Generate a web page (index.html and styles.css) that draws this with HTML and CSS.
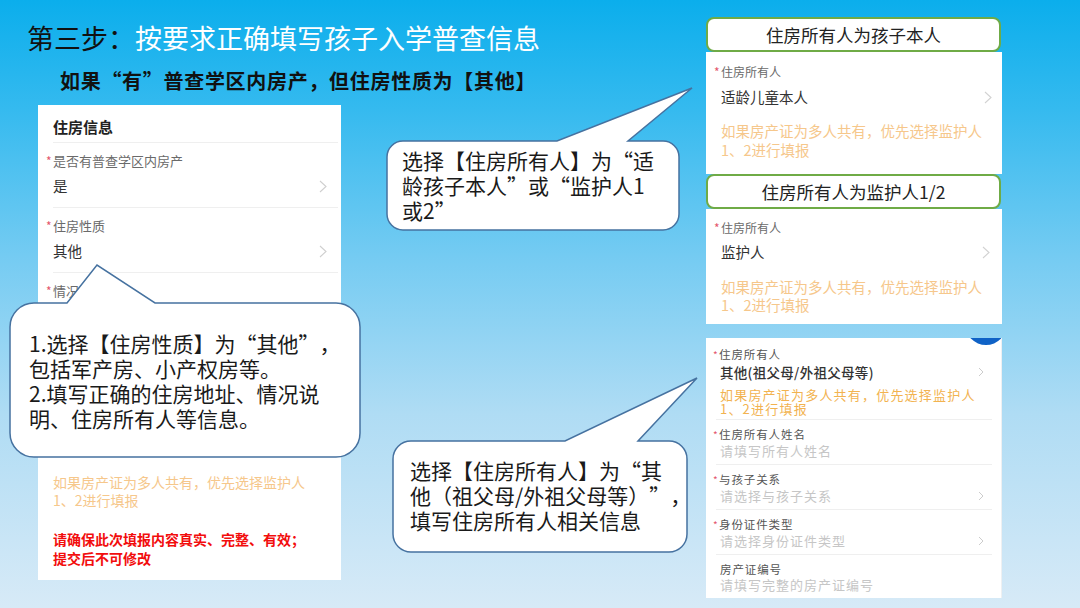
FILE: index.html
```html
<!DOCTYPE html>
<html lang="zh-CN">
<head>
<meta charset="utf-8">
<title>第三步</title>
<link rel="stylesheet" href="styles.css">
</head>
<body>
<div class="slide">
  <div class="left">
    <h1 class="title"><span class="step">第三步：</span>按要求正确填写孩子入学普查信息</h1>
    <p class="subtitle">如果“有”普查学区内房产，但住房性质为【其他】</p>
    <section class="form-main">
      <div class="form-head">住房信息</div>
      <div class="row">
        <div class="label"><span class="star">*</span>是否有普查学区内房产</div>
        <div class="value"><span>是</span><svg class="chev" width="8" height="13" viewBox="0 0 8 13"><path d="M1 1l6 5.5L1 12" fill="none" stroke="#cfcfcf" stroke-width="1.1"/></svg></div>
      </div>
      <div class="row">
        <div class="label"><span class="star">*</span>住房性质</div>
        <div class="value"><span>其他</span><svg class="chev" width="8" height="13" viewBox="0 0 8 13"><path d="M1 1l6 5.5L1 12" fill="none" stroke="#cfcfcf" stroke-width="1.1"/></svg></div>
      </div>
      <div class="row last">
        <div class="label"><span class="star">*</span>情况说明</div>
      </div>
      <div class="covered"></div>
      <p class="note">如果房产证为多人共有，优先选择监护人<br>1、2进行填报</p>
      <p class="warn">请确保此次填报内容真实、完整、有效；<br>提交后不可修改</p>
    </section>
  </div>

  <div class="right">
    <div class="case-head">住房所有人为孩子本人</div>
    <div class="card card-a">
      <div class="label small"><span class="star">*</span>住房所有人</div>
      <div class="value"><span>适龄儿童本人</span><svg class="chev" width="8" height="13" viewBox="0 0 8 13"><path d="M1 1l6 5.5L1 12" fill="none" stroke="#d2d2d2" stroke-width="1.1"/></svg></div>
      <p class="note note-a">如果房产证为多人共有，优先选择监护人<br>1、2进行填报</p>
    </div>
    <div class="case-head">住房所有人为监护人1/2</div>
    <div class="card card-b">
      <div class="label small"><span class="star">*</span>住房所有人</div>
      <div class="value"><span>监护人</span><svg class="chev" width="8" height="13" viewBox="0 0 8 13"><path d="M1 1l6 5.5L1 12" fill="none" stroke="#d2d2d2" stroke-width="1.1"/></svg></div>
      <p class="note note-b">如果房产证为多人共有，优先选择监护人<br>1、2进行填报</p>
    </div>
    <div class="card card-c">
      <div class="badge"></div>
      <div class="c-first">
        <div class="c-label"><span class="c-star">*</span>住房所有人</div>
        <div class="c-value"><span>其他(祖父母/外祖父母等)</span><svg class="chev-s" width="6" height="10" viewBox="0 0 6 10"><path d="M1 1l4 4L1 9" fill="none" stroke="#cccccc" stroke-width="1"/></svg></div>
        <p class="c-note">如果房产证为多人共有，优先选择监护人<br>1、2进行填报</p>
      </div>
      <div class="c-row">
        <div class="c-label"><span class="c-star">*</span>住房所有人姓名</div>
        <div class="c-ph"><span>请填写所有人姓名</span></div>
      </div>
      <div class="c-row">
        <div class="c-label"><span class="c-star">*</span>与孩子关系</div>
        <div class="c-ph"><span>请选择与孩子关系</span><svg class="chev-s" width="6" height="10" viewBox="0 0 6 10"><path d="M1 1l4 4L1 9" fill="none" stroke="#cccccc" stroke-width="1"/></svg></div>
      </div>
      <div class="c-row">
        <div class="c-label"><span class="c-star">*</span>身份证件类型</div>
        <div class="c-ph"><span>请选择身份证件类型</span><svg class="chev-s" width="6" height="10" viewBox="0 0 6 10"><path d="M1 1l4 4L1 9" fill="none" stroke="#cccccc" stroke-width="1"/></svg></div>
      </div>
      <div class="c-row last">
        <div class="c-label">房产证编号</div>
        <div class="c-ph"><span>请填写完整的房产证编号</span></div>
      </div>
    </div>
  </div>

  <div class="callout callout-1">
    <svg class="bubble" width="350" height="154" viewBox="0 0 350 154"><path d="M24,0 H57 L87,-38 L145,0 H326 A24,24 0 0 1 350,24 V130 A24,24 0 0 1 326,154 H24 A24,24 0 0 1 0,130 V24 A24,24 0 0 1 24,0 Z"/></svg>
    <p class="callout-text">1.选择【住房性质】为“其他”，<br>包括军产房、小产权房等。<br>2.填写正确的住房地址、情况说<br>明、住房所有人等信息。</p>
  </div>

  <div class="callout callout-2">
    <svg class="bubble" width="292" height="89" viewBox="0 0 292 89"><path d="M16,0 H170 L305,-53 L241,0 H276 A16,16 0 0 1 292,16 V73 A16,16 0 0 1 276,89 H16 A16,16 0 0 1 0,73 V16 A16,16 0 0 1 16,0 Z"/></svg>
    <p class="callout-text">选择【住房所有人】为“适<br>龄孩子本人”或“监护人1<br>或2”</p>
  </div>

  <div class="callout callout-3">
    <svg class="bubble" width="294" height="111" viewBox="0 0 294 111"><path d="M18,0 H172 L304,-63 L245,0 H276 A18,18 0 0 1 294,18 V93 A18,18 0 0 1 276,111 H18 A18,18 0 0 1 0,93 V18 A18,18 0 0 1 18,0 Z"/></svg>
    <p class="callout-text">选择【住房所有人】为“其<br>他（祖父母/外祖父母等）”，<br>填写住房所有人相关信息</p>
  </div>
</div>
</body>
</html>
```

FILE: styles.css
```css
* { box-sizing: border-box; }

body {
  margin: 0;
  font-family: "Noto Sans CJK SC", "Noto Sans", sans-serif;
  text-spacing-trim: space-all;
}

.slide {
  position: relative;
  width: 1080px;
  height: 608px;
  overflow: hidden;
  display: flex;
  align-items: flex-start;
  background: linear-gradient(180deg, #0baeec 0%, #35baef 18%, #74cbf2 42%, #afdcf4 68%, #d7eaf7 100%);
}

/* ---------- left column ---------- */
.left {
  width: 706px;
  flex: none;
  padding-top: 20px;
}

.title {
  margin: 0 0 0 27px;
  font-size: 27px;
  font-weight: 400;
  line-height: 36px;
  color: #ffffff;
  white-space: nowrap;
}

.title .step { color: #111111; }

.subtitle {
  margin: 12px 0 0 60px;
  font-size: 20px;
  font-weight: 700;
  letter-spacing: 0.7px;
  line-height: 26px;
  color: #111111;
  white-space: nowrap;
}

.form-main {
  margin: 11px 0 0 38px;
  width: 303px;
  background: #ffffff;
  padding: 0 3px 12px 15px;
}

.form-head {
  font-size: 15px;
  font-weight: 700;
  line-height: 22px;
  color: #222222;
  padding: 11px 0 4px;
  border-bottom: 1px solid #efefef;
}

.row {
  padding: 9px 0 10px;
  border-bottom: 1px solid #efefef;
}

.row.last {
  border-bottom: 0;
  padding-bottom: 0;
}

/* area of the form hidden under the first callout */
.covered {
  height: 157px;
}

.label {
  font-size: 13px;
  line-height: 18px;
  color: #6a6a6a;
  white-space: nowrap;
}

.label.small { font-size: 12px; }

.star {
  display: inline-block;
  width: 7px;
  margin-left: -7px;
  font-size: 12px;
  color: #e4566c;
}

.value {
  margin-top: 5px;
  font-size: 14.5px;
  line-height: 22px;
  color: #333333;
  display: flex;
  justify-content: space-between;
  align-items: center;
  padding-right: 11px;
}

.note {
  margin: 16px 0 0;
  font-size: 14px;
  line-height: 18px;
  color: #f6c78b;
  white-space: nowrap;
}

.warn {
  margin: 21px 0 0;
  font-size: 14px;
  line-height: 19px;
  font-weight: 700;
  color: #f20d0d;
  white-space: nowrap;
}

/* ---------- right column ---------- */
.right {
  width: 296px;
  flex: none;
  padding-top: 17px;
}

.case-head {
  height: 35px;
  margin-right: 1px;
  border: 2px solid #6fab46;
  border-radius: 8px;
  background: #ffffff;
  display: flex;
  align-items: center;
  justify-content: center;
  font-size: 17.5px;
  color: #222222;
}

.card {
  background: #ffffff;
}

.card-a { padding: 11px 0 15px 15px; }
.card-b { padding: 10px 0 10px 15px; }

.card-a .value { padding-right: 10px; }
.card-b .value { margin-top: 4px; padding-right: 12px; }

.note-a {
  margin-top: 13px;
  font-size: 14.5px;
  line-height: 19px;
}

.note-b {
  margin-top: 15px;
  font-size: 14.5px;
  line-height: 18px;
}

.card-c {
  position: relative;
  overflow: hidden;
  margin-top: 14px;
  padding: 0 9px 0 10px;
  border-right: 1px solid #eef0f2;
}

.badge {
  position: absolute;
  left: 259px;
  top: -35px;
  width: 42px;
  height: 42px;
  border-radius: 50%;
  background: #0f62c6;
}

.c-first {
  padding: 8px 0 3px 4px;
  border-bottom: 1px solid #efefef;
}

.c-row {
  padding: 6px 0 5px 4px;
  border-bottom: 1px solid #efefef;
}

.c-row.last { border-bottom: 0; }

.c-label {
  font-size: 11.5px;
  letter-spacing: 0.9px;
  line-height: 16px;
  color: #555555;
  white-space: nowrap;
}

.c-star {
  display: inline-block;
  width: 6px;
  margin-left: -7px;
  font-size: 10px;
  letter-spacing: 0;
  color: #e4566c;
}

.c-value {
  font-size: 13.5px;
  font-weight: 500;
  letter-spacing: 0.3px;
  line-height: 18px;
  color: #333333;
  display: flex;
  justify-content: space-between;
  align-items: center;
  padding-right: 8px;
}

.c-note {
  margin: 7px 0 0;
  font-size: 13px;
  letter-spacing: 1.2px;
  line-height: 14px;
  color: #f2b350;
  white-space: nowrap;
}

.c-ph {
  font-size: 13px;
  letter-spacing: 1px;
  line-height: 16px;
  color: #c6c6c6;
  display: flex;
  justify-content: space-between;
  align-items: center;
  padding-right: 8px;
}

/* ---------- callouts (overlay) ---------- */
.callout {
  position: absolute;
}

.bubble {
  position: absolute;
  left: 0;
  top: 0;
  overflow: visible;
}

.bubble path {
  fill: #ffffff;
  stroke: #4672a0;
  stroke-width: 1.5;
}

.callout-text {
  position: relative;
  margin: 0;
  font-size: 21px;
  line-height: 25px;
  color: #1a1a1a;
  white-space: nowrap;
}

.callout-1 {
  left: 10px;
  top: 303px;
  width: 350px;
  height: 154px;
  padding: 28px 0 0 19px;
}

.callout-2 {
  left: 387px;
  top: 141px;
  width: 292px;
  height: 89px;
  padding: 7px 0 0 15px;
}

.callout-3 {
  left: 393px;
  top: 441px;
  width: 294px;
  height: 111px;
  padding: 17px 0 0 17px;
}
```
